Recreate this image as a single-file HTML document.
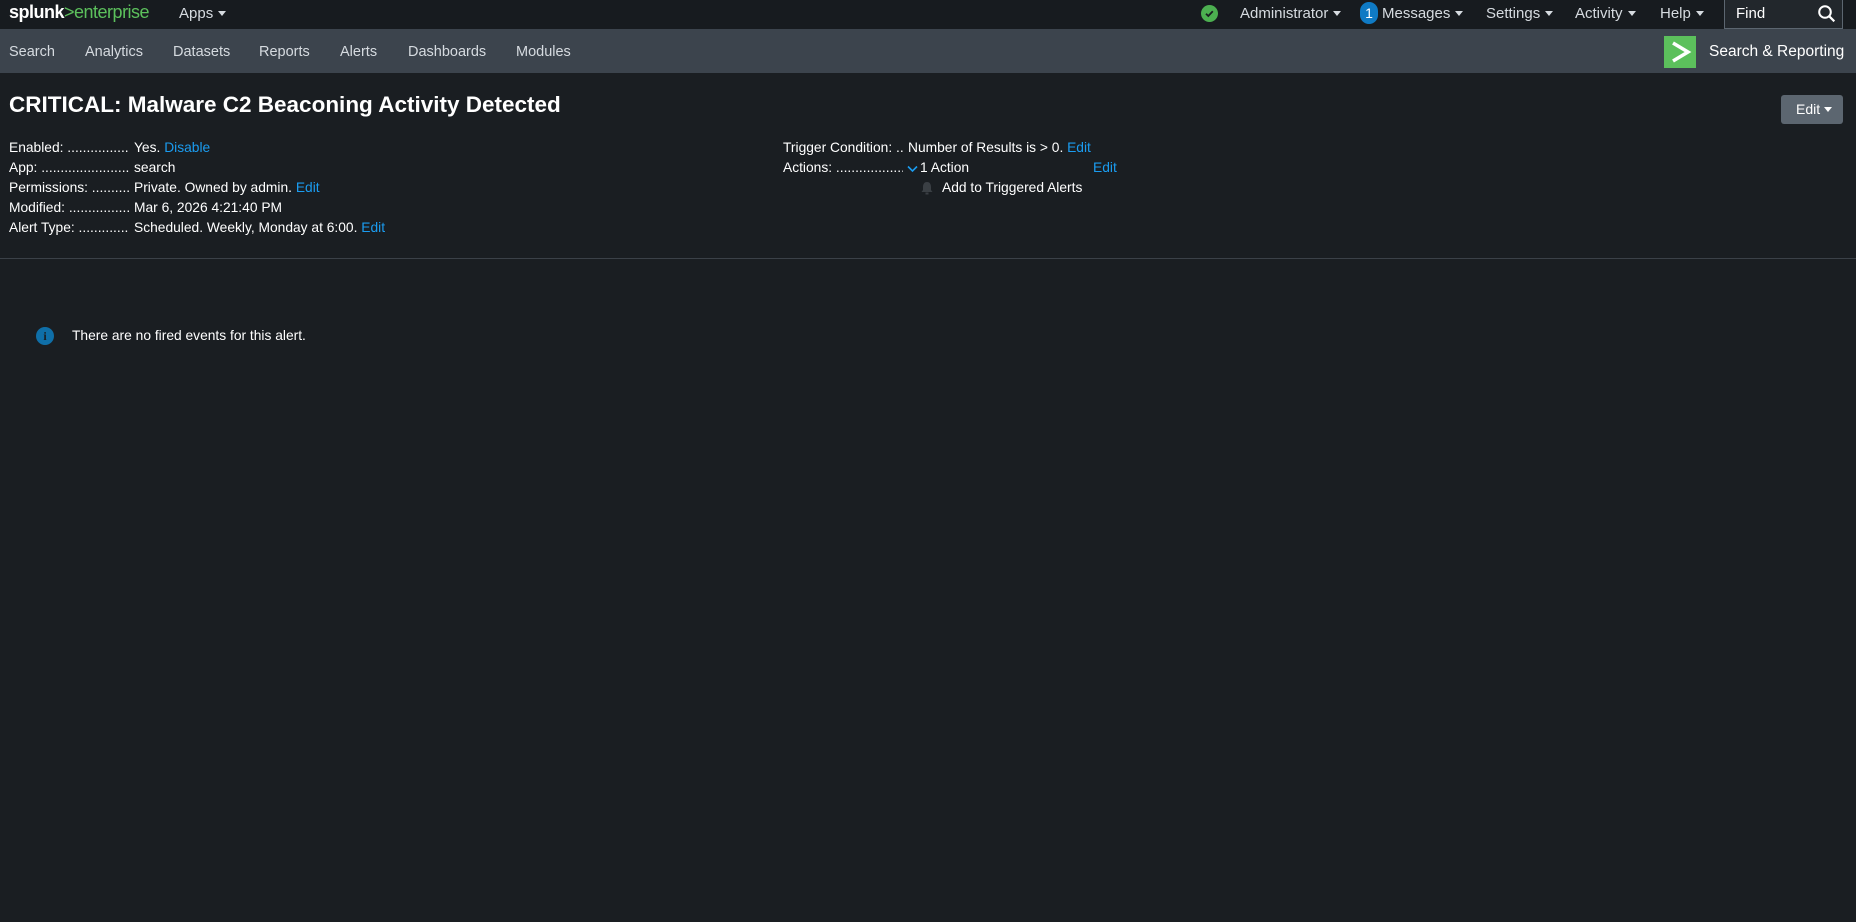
<!DOCTYPE html>
<html><head><meta charset="utf-8">
<style>
*{margin:0;padding:0;box-sizing:border-box}
body{width:1856px;height:922px;background:#1a1e22;font-family:"Liberation Sans",sans-serif;color:#fff;position:relative;overflow:hidden}
.a{position:absolute;white-space:nowrap}
.top{position:absolute;left:0;top:0;width:1856px;height:29px;background:#171b1f}
.nav{position:absolute;left:0;top:29px;width:1856px;height:44px;background:#3c444d}
.tn{font-size:15px;color:#d6dbe0;top:5px}
.car{display:inline-block;width:0;height:0;border-left:4px solid transparent;border-right:4px solid transparent;border-top:5px solid #d6dbe0;vertical-align:middle;margin-left:5px;margin-top:-2px}
.sn{font-size:14.5px;color:#d6dbe0;top:44px}
.lab{font-size:13.8px;color:#fff}
.dl{width:120px;overflow:hidden}
.lnk{color:#1a9cf0}
</style></head><body>
<div class="top"></div>
<div class="nav"></div>
<div class="a" style="left:9px;top:2px;font-size:18px;font-weight:bold;letter-spacing:-0.5px;color:#fff">splunk<span style="color:#5cc05c;font-weight:normal">&gt;enterprise</span></div>
<div class="a tn" style="left:179px">Apps<span class="car"></span></div>
<div class="a" style="left:1201px;top:5px;width:17px;height:17px;border-radius:50%;background:#4caf50"><svg width="17" height="17" viewBox="0 0 17 17"><path d="M5 8.7l2.3 2.3 4.5-4.8" stroke="#1a1e22" stroke-width="1.8" fill="none"/></svg></div>
<div class="a tn" style="left:1240px">Administrator<span class="car"></span></div>
<div class="a" style="left:1360px;top:2px;width:18px;height:22px;border-radius:10px;background:#0f7ac4;color:#fff;font-size:14px;text-align:center;line-height:22px">1</div>
<div class="a tn" style="left:1382px">Messages<span class="car"></span></div>
<div class="a tn" style="left:1486px">Settings<span class="car"></span></div>
<div class="a tn" style="left:1575px">Activity<span class="car"></span></div>
<div class="a tn" style="left:1660px">Help<span class="car"></span></div>
<div class="a" style="left:1724px;top:-1px;width:119px;height:30px;border:1px solid #5c6670;background:#22272c"></div>
<div class="a" style="left:1736px;top:5px;font-size:15px;color:#fff">Find</div>
<svg class="a" style="left:1817px;top:4px" width="20" height="20" viewBox="0 0 20 20"><circle cx="8" cy="8" r="5.8" stroke="#fff" stroke-width="2" fill="none"/><path d="M12.3 12.3l5 5" stroke="#fff" stroke-width="2.2"/></svg>

<div class="a sn" style="left:9px">Search</div>
<div class="a sn" style="left:85px">Analytics</div>
<div class="a sn" style="left:173px">Datasets</div>
<div class="a sn" style="left:259px">Reports</div>
<div class="a sn" style="left:340px">Alerts</div>
<div class="a sn" style="left:408px">Dashboards</div>
<div class="a sn" style="left:516px">Modules</div>
<div class="a" style="left:1664px;top:36px;width:32px;height:32px;background:#5cc05c"><svg width="32" height="32" viewBox="0 0 32 32"><path d="M9 7l15 9-15 9" stroke="#fff" stroke-width="3.5" fill="none"/></svg></div>
<div class="a" style="left:1709px;top:43px;font-size:15.5px;color:#fff">Search &amp; Reporting</div>

<div class="a" style="left:9px;top:92px;font-size:22.5px;font-weight:bold;color:#fff">CRITICAL: Malware C2 Beaconing Activity Detected</div>
<div class="a" style="left:1781px;top:95px;width:62px;height:29px;background:#5c6670;border-radius:3px;font-size:14px;color:#fff;line-height:29px;padding-left:15px">Edit<span class="car" style="border-top-color:#fff;margin-left:4px"></span></div>

<div class="a lab dl" style="left:9px;top:140px">Enabled: ..............................</div>
<div class="a lab" style="left:134px;top:140px">Yes. <span class="lnk">Disable</span></div>
<div class="a lab dl" style="left:9px;top:160px">App: ......................................</div>
<div class="a lab" style="left:134px;top:160px">search</div>
<div class="a lab dl" style="left:9px;top:180px">Permissions: .......................</div>
<div class="a lab" style="left:134px;top:180px">Private. Owned by admin. <span class="lnk">Edit</span></div>
<div class="a lab dl" style="left:9px;top:200px">Modified: .............................</div>
<div class="a lab" style="left:134px;top:200px">Mar 6, 2026 4:21:40 PM</div>
<div class="a lab dl" style="left:9px;top:220px">Alert Type: ...........................</div>
<div class="a lab" style="left:134px;top:220px">Scheduled. Weekly, Monday at 6:00. <span class="lnk">Edit</span></div>

<div class="a lab dl" style="left:783px;top:140px;width:120px">Trigger Condition: ........</div>
<div class="a lab" style="left:908px;top:140px">Number of Results is &gt; 0. <span class="lnk">Edit</span></div>
<div class="a lab dl" style="left:783px;top:160px;width:120px">Actions: ...................................</div>
<svg class="a" style="left:907px;top:165px" width="11" height="8" viewBox="0 0 11 8"><path d="M1 1.5l4.5 4.5 4.5-4.5" stroke="#1a9cf0" stroke-width="1.6" fill="none"/></svg>
<div class="a lab" style="left:920px;top:160px">1 Action</div>
<div class="a lab lnk" style="left:1093px;top:160px">Edit</div>
<svg class="a" style="left:921px;top:181px" width="12" height="14" viewBox="0 0 12 14"><path d="M6 1c-3 0-4 2.5-4 5v3l-1.5 2h11L10 9V6c0-2.5-1-5-4-5z" fill="#3a3f44"/><rect x="4.5" y="11.5" width="3" height="2" fill="#3a3f44"/></svg>
<div class="a lab" style="left:942px;top:180px">Add to Triggered Alerts</div>

<div class="a" style="left:0;top:258px;width:1856px;height:1px;background:#3b4148"></div>

<div class="a" style="left:36px;top:327px;width:18px;height:18px;border-radius:50%;background:#0f6fa8;color:#1a1e22;font-size:12px;font-weight:bold;text-align:center;line-height:18px;font-family:'Liberation Serif',serif">i</div>
<div class="a" style="left:72px;top:328px;font-size:13.8px;color:#fff">There are no fired events for this alert.</div>
</body></html>
